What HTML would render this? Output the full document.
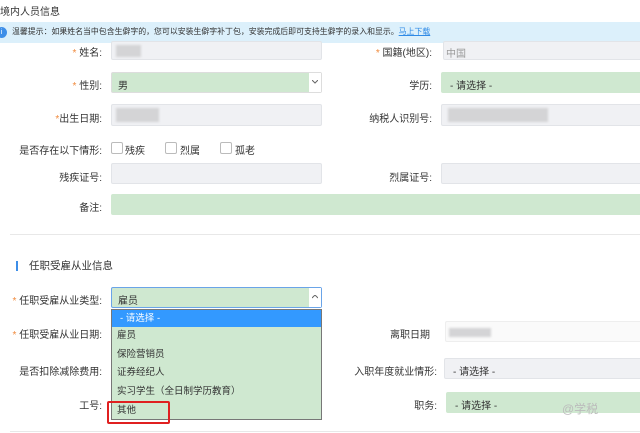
<!DOCTYPE html><html><head><meta charset="utf-8"><style>
body{margin:0;width:640px;height:433px;overflow:hidden;background:#fff;font-family:"Liberation Sans","Noto Sans CJK SC",sans-serif;font-size:10px;color:#333;position:relative}
.a{position:absolute;white-space:nowrap}
.in{position:absolute;background:#f0f1f4;border:1px solid #e2e4e8;border-radius:2px;box-sizing:border-box}
.g{background:#cfe8d0;border-color:#cfe8d0}
.l{position:absolute;text-align:right;white-space:nowrap}
.s{color:#f08a3c}
.cb{position:absolute;width:10px;height:10px;border:1px solid #bbb;border-radius:2px;background:#fff}
.blur{position:absolute;background:#d4d4d6;filter:blur(1px)}
.ch{position:absolute;right:0;top:0;width:12px;height:19px;background:#fff}
.ch svg{position:absolute;left:3px;top:7px}
</style></head><body>
<div class="a" style="left:0;top:3px;font-size:10px">境内人员信息</div>
<div class="a" style="left:0;top:22px;width:640px;height:21px;background:#dcf0fb"></div>
<div class="a" style="left:-4px;top:27px;width:11px;height:11px;border-radius:50%;background:#3d8ee8;color:#fff;font-size:7px;text-align:center;line-height:11px">i</div>
<div class="a" style="left:12px;top:26px;font-size:7.9px">温馨提示：如果姓名当中包含生僻字的，您可以安装生僻字补丁包，安装完成后即可支持生僻字的录入和显示。<span style="color:#2f8ae6;text-decoration:underline">马上下载</span></div>

<div class="l" style="right:538px;top:44px"><span class="s">*</span> 姓名:</div>
<div class="in" style="left:111px;top:41px;width:211px;height:19px"></div>
<div class="blur" style="left:116px;top:45px;width:25px;height:12px"></div>
<div class="l" style="right:208px;top:44px"><span class="s">*</span> 国籍(地区):</div>
<div class="in" style="left:443px;top:41px;width:200px;height:19px;color:#999;padding:3px 2px">中国</div>

<div class="l" style="right:538px;top:77px"><span class="s">*</span> 性别:</div>
<div class="in g" style="left:111px;top:72px;width:211px;height:21px;padding:4px 6px;border-color:#ddd">男<span class="ch"><svg width="6" height="4"><path d="M0 0L3 3L6 0" fill="none" stroke="#666"/></svg></span></div>
<div class="l" style="right:208px;top:77px">学历:</div>
<div class="in g" style="left:441px;top:72px;width:202px;height:21px;padding:4px 8px">- 请选择 -</div>

<div class="l" style="right:538px;top:110px"><span class="s">*</span>出生日期:</div>
<div class="in" style="left:111px;top:104px;width:211px;height:22px"></div>
<div class="blur" style="left:116px;top:108px;width:43px;height:14px"></div>
<div class="l" style="right:208px;top:110px">纳税人识别号:</div>
<div class="in" style="left:441px;top:104px;width:202px;height:22px"></div>
<div class="blur" style="left:448px;top:108px;width:100px;height:14px"></div>

<div class="l" style="right:538px;top:142px">是否存在以下情形:</div>
<div class="cb" style="left:111px;top:142px"></div><div class="a" style="left:125px;top:142px">残疾</div>
<div class="cb" style="left:165px;top:142px"></div><div class="a" style="left:180px;top:142px">烈属</div>
<div class="cb" style="left:220px;top:142px"></div><div class="a" style="left:235px;top:142px">孤老</div>

<div class="l" style="right:538px;top:169px">残疾证号:</div>
<div class="in" style="left:111px;top:163px;width:211px;height:21px"></div>
<div class="l" style="right:208px;top:169px">烈属证号:</div>
<div class="in" style="left:441px;top:163px;width:202px;height:21px"></div>

<div class="l" style="right:538px;top:199px">备注:</div>
<div class="in g" style="left:111px;top:194px;width:532px;height:21px"></div>

<div class="a" style="left:10px;top:234px;width:630px;height:1px;background:#e8e8e8"></div>
<div class="a" style="left:16px;top:261px;width:2px;height:10px;background:#3d8ee8"></div>
<div class="a" style="left:29px;top:258px;font-size:10.5px">任职受雇从业信息</div>

<div class="l" style="right:538px;top:292px"><span class="s">*</span> 任职受雇从业类型:</div>
<div class="in g" style="left:111px;top:287px;width:211px;height:21px;border-color:#6aa4e8;padding:4px 6px">雇员<span class="ch"><svg width="6" height="4"><path d="M0 3L3 0L6 3" fill="none" stroke="#666"/></svg></span></div>

<div class="l" style="right:538px;top:326px"><span class="s">*</span> 任职受雇从业日期:</div>
<div class="l" style="right:210px;top:326px">离职日期</div>
<div class="in" style="left:445px;top:321px;width:198px;height:21px;background:#fafafa;border-color:#eee"></div>
<div class="blur" style="left:449px;top:328px;width:42px;height:9px"></div>
<div class="l" style="right:538px;top:363px">是否扣除减除费用:</div>
<div class="l" style="right:203px;top:363px">入职年度就业情形:</div>
<div class="in" style="left:444px;top:358px;width:199px;height:21px;padding:4px 8px">- 请选择 -</div>
<div class="l" style="right:203px;top:397px">职务:</div>
<div class="l" style="right:538px;top:397px">工号:</div>
<div class="in g" style="left:446px;top:392px;width:197px;height:21px;padding:4px 8px">- 请选择 -</div>
<div class="a" style="left:562px;top:400px;color:#bbb;font-size:12px">@学税</div>

<div class="a" style="left:111px;top:309px;width:211px;height:111px;background:#cfe8d0;border:1px solid #777;box-sizing:border-box;font-size:9.5px">
<div style="background:#3399ff;color:#fff;height:17px;line-height:17px;padding-left:8px">- 请选择 -</div>
<div style="padding-left:5px;line-height:18.7px">雇员<br>保险营销员<br>证券经纪人<br>实习学生（全日制学历教育）<br>其他</div>
</div>
<div class="a" style="left:107px;top:401px;width:63px;height:23px;border:2px solid #e02020;box-sizing:border-box;border-radius:2px"></div>
<div class="a" style="left:10px;top:431px;width:630px;height:1px;background:#e8e8e8"></div>
</body></html>
